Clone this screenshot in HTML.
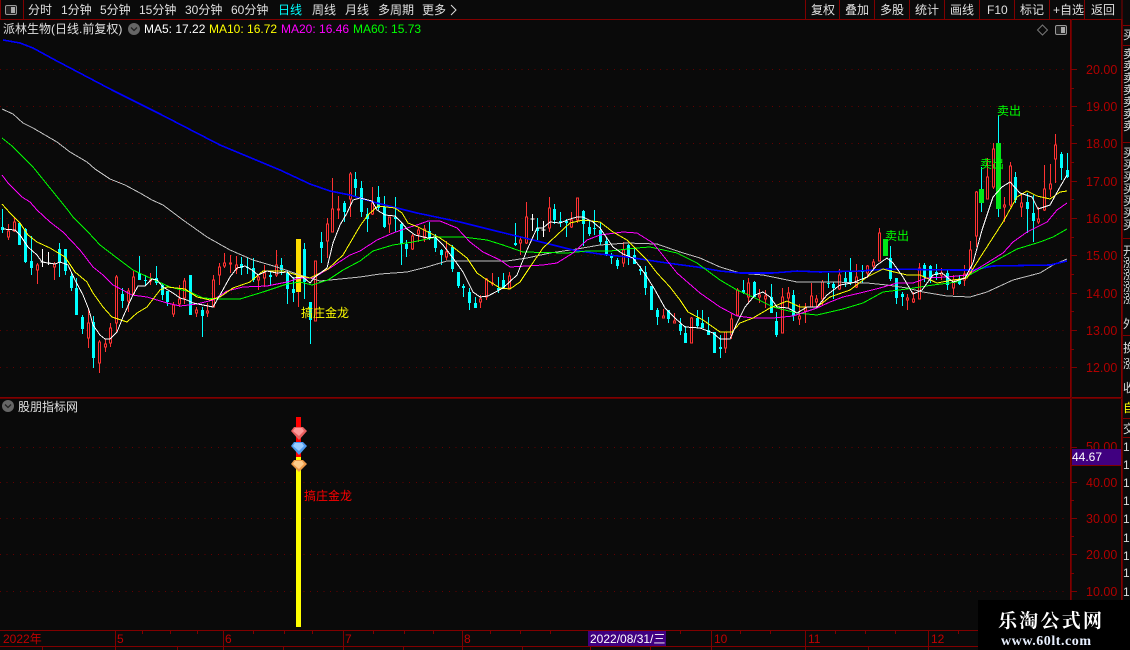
<!DOCTYPE html>
<html><head><meta charset="utf-8"><style>
html,body{margin:0;padding:0;background:#0a0a0a}
svg{display:block}
text{font-family:"Liberation Sans","WenQuanYi Zen Hei","Noto Sans CJK SC",sans-serif;font-size:12px;white-space:pre}
.b{fill:#e0e0e0}
.ax{fill:#b00000;font-size:12.5px}
.c{fill:#ddd}
</style></head><body>
<svg width="1130" height="650" viewBox="0 0 1130 650" xmlns="http://www.w3.org/2000/svg">
<rect width="1130" height="650" fill="#0a0a0a"/>

<!-- grid -->
<path d="M0 69.5H1066M0 106.5H1066M0 143.5H1066M0 181.5H1066M0 218.5H1066M0 255.5H1066M0 293.5H1066M0 330.5H1066M0 367.5H1066M0 447.5H1066M0 482.5H1066M0 518.5H1066M0 554.5H1066M0 591.5H1066" stroke="#640000" stroke-dasharray="1 5.6" fill="none" shape-rendering="crispEdges"/>

<!-- candles -->
<g transform="translate(.5 0)" shape-rendering="crispEdges" fill="none">
<path stroke="#ff3232" d="M8 224V240M14 218V232M37 263V284M54 262V280M88 308V348M99 340V373M105 339V352M110 323V347M116 275V332M128 288V312M133 271V295M150 273V285M173 302V317M179 285V307M184 278V304M196 307V317M207 303V317M213 275V307M219 263V285M224 253V268M230 255V273M236 256V274M258 275V290M264 265V287M276 250V277M298 240V307M315 261V321M327 218V258M332 178V232M338 196V219M350 172V217M372 187V215M389 217V233M412 234V250M418 227V242M424 225V242M446 241V260M480 295V308M486 278V300M492 273V286M509 272V289M520 237V255M526 202V244M549 197V232M571 212V228M577 198V223M623 242V267M663 309V318M674 313V323M691 317V343M725 332V353M731 314V339M737 288V315M748 278V303M759 289V303M765 290V308M782 288V333M788 287V308M799 304V325M805 303V323M811 283V307M816 295V307M822 280V306M839 269V290M856 264V288M867 265V278M873 259V270M879 228V261M907 294V310M913 292V303M919 263V299M941 268V280M953 275V295M964 265V286M970 241V275M976 191V247M987 158V199M993 143V189M1004 197V222M1010 162V207M1021 193V217M1038 207V224M1044 165V211M1050 164V197M1055 134V183"/>
<path stroke="#ff3232" fill="#0a0a0a" d="M7 231h2v6h-2zM13 222h2v9h-2zM36 265h2v5h-2zM53 264h2v3h-2zM87 323h2v15h-2zM98 342h2v21h-2zM104 344h2v3h-2zM109 328h2v15h-2zM115 277h2v46h-2zM127 291h2v10h-2zM132 277h2v17h-2zM149 280h2v1h-2zM172 305h2v9h-2zM178 299h2v5h-2zM183 281h2v17h-2zM195 310h2v3h-2zM206 311h2v2h-2zM212 280h2v27h-2zM218 267h2v8h-2zM223 263h2v3h-2zM229 263h2v1h-2zM235 265h2v4h-2zM257 277h2v3h-2zM263 273h2v5h-2zM275 265h2v10h-2zM314 261h2v60h-2zM326 224h2v17h-2zM331 209h2v23h-2zM337 209h2v1h-2zM349 174h2v25h-2zM371 203h2v11h-2zM388 217h2v7h-2zM411 236h2v13h-2zM417 230h2v4h-2zM423 229h2v9h-2zM445 252h2v5h-2zM479 299h2v3h-2zM485 279h2v18h-2zM491 283h2v1h-2zM508 276h2v12h-2zM519 240h2v3h-2zM525 217h2v26h-2zM548 208h2v20h-2zM570 220h2v7h-2zM576 198h2v22h-2zM622 250h2v13h-2zM662 316h2v2h-2zM673 321h2v2h-2zM690 318h2v25h-2zM724 332h2v16h-2zM730 319h2v16h-2zM736 290h2v25h-2zM747 283h2v14h-2zM758 295h2v2h-2zM764 296h2v3h-2zM781 297h2v36h-2zM787 293h2v5h-2zM798 316h2v3h-2zM804 308h2v3h-2zM810 296h2v11h-2zM815 299h2v3h-2zM821 282h2v17h-2zM838 275h2v14h-2zM855 277h2v10h-2zM866 266h2v7h-2zM872 262h2v4h-2zM878 233h2v28h-2zM906 298h2v2h-2zM912 299h2v3h-2zM918 268h2v31h-2zM940 273h2v2h-2zM952 280h2v8h-2zM963 274h2v6h-2zM969 250h2v24h-2zM975 192h2v44h-2zM986 177h2v22h-2zM992 149h2v38h-2zM1003 205h2v2h-2zM1009 166h2v39h-2zM1020 203h2v4h-2zM1037 219h2v3h-2zM1043 189h2v21h-2zM1049 184h2v5h-2zM1054 145h2v14h-2z"/>
<path stroke="#00ffff" d="M2 209V233M19 223V245M25 228V263M31 236V275M59 243V277M65 249V275M71 272V291M76 278V315M82 315V334M93 316V368M122 288V308M139 256V280M145 275V285M156 266V285M162 283V300M167 291V306M190 275V315M202 307V337M241 257V275M247 257V274M253 258V282M270 272V285M281 258V275M287 270V304M293 277V302M304 243V299M310 302V344M321 232V263M344 201V222M355 172V197M361 181V217M367 208V232M378 186V210M384 196V228M395 197V232M401 223V265M406 240V257M429 222V240M435 234V252M441 249V265M452 245V272M458 272V288M463 284V297M469 288V310M475 297V308M498 277V293M503 273V289M515 223V246M537 218V240M554 204V224M560 212V227M566 219V237M583 210V246M589 220V236M594 210V235M600 222V245M606 237V256M611 253V264M617 258V269M628 244V265M634 248V264M640 266V275M645 266V295M651 286V310M657 308V325M668 310V323M680 318V335M685 326V343M697 310V328M702 310V328M708 317V335M714 332V353M720 335V358M743 280V294M754 281V297M771 284V313M776 312V337M793 290V321M828 273V288M833 282V299M845 272V287M850 258V285M862 265V283M890 246V281M896 278V304M902 292V306M924 263V282M930 265V283M936 264V280M947 270V290M959 275V285M981 167V212M998 115V217M1015 172V203M1027 193V233M1033 195V242M1061 152V180M1067 153V178"/>
<path stroke="#00ffff" stroke-width="3" d="M2 227V230M19 223V245M25 229V262M31 261V268M59 249V263M65 249V271M71 276V288M76 288V315M82 317V329M93 322V358M122 294V301M139 273V280M145 280V281M156 278V283M162 285V295M167 291V302M190 275V315M202 310V316M241 264V268M247 267V268M253 268V280M270 275V277M281 265V270M287 273V289M293 289V293M304 249V282M310 302V320M321 242V248M344 203V212M355 179V188M361 188V212M367 214V219M378 197V208M384 207V227M395 217V219M401 224V244M406 244V249M429 231V238M435 237V248M441 250V255M452 247V269M458 272V286M463 286V288M469 292V303M475 303V308M498 288V290M503 280V288M515 243V245M537 228V231M554 209V220M560 221V223M566 221V223M583 211V224M589 227V234M594 228V229M600 230V242M606 241V255M611 256V258M617 260V266M628 245V257M634 255V264M640 269V271M645 272V288M651 286V310M657 310V317M668 310V319M680 324V331M685 333V343M697 318V326M702 323V328M708 330V335M714 332V353M720 347V349M743 290V293M754 282V297M771 297V313M776 321V335M793 295V316M828 283V284M833 284V288M845 278V283M850 272V283M862 270V272M890 258V279M896 278V298M902 294V297M924 265V277M930 266V278M936 272V275M947 273V285M959 280V284M1015 177V200M1027 202V209M1033 213V221M1061 154V168M1067 170V177"/>
<path stroke="#fff" d="M42 249V267M48 252V265M532 214V231M543 221V237M40 262H44M46 263H50M530 219H534M541 230H545"/>
<rect x="295.5" y="239" width="5" height="53" fill="#ffdd00"/>
<rect x="882.5" y="239" width="5" height="17" fill="#00e818"/>
<rect x="978.5" y="189" width="5" height="14" fill="#00e818"/>
<rect x="995.5" y="143" width="5" height="66" fill="#00e818"/>
</g>

<!-- moving averages -->
<g fill="none" shape-rendering="crispEdges">
<polyline stroke="#c0c0c0" points="2,109 13,114 23,123 33,128 45,135 57,142 70,152 87,162 95,169 110,179 125,185 140,193 152,200 163,205 183,220 207,237 230,250 253,260 277,267 300,275 320,281 340,279 360,277 380,274 407,272 427,267 447,261 507,261 527,258 550,253 577,249 600,245 627,243 657,244 680,252 700,258 720,267 740,273 763,275 797,282 833,282 867,283 887,285 907,288 923,292 947,296 970,297 987,292 1013,280 1040,273 1053,265 1067,259"/>
<polyline stroke="#0000ff" stroke-width="1.6" points="3,40 20,43 33,48 55,60 112,90 140,104 160,114 220,145 280,170 310,184 330,191 350,195 377,203 417,213 460,222 500,232 533,240 573,250 600,254 627,257 667,263 697,267 720,271 740,273 773,273 797,271 820,272 860,271 887,269 953,270 973,270 993,266 1050,265 1067,261"/>
<polyline stroke="#00ff00" points="2,138 12,146 33,167 50,188 67,209 73,217 88,232 100,245 117,258 133,270 150,278 170,287 190,292 203,298 220,299 240,299 263,292 287,284 300,282 312,285 328,280 343,270 360,261 373,251 393,245 413,242 437,237 463,237 487,240 503,245 523,252 567,253 587,251 610,251 637,248 650,247 677,253 697,263 720,280 737,290 753,297 773,307 797,313 817,315 843,309 863,303 883,292 907,289 933,285 957,282 973,273 997,260 1017,249 1040,242 1053,237 1067,229"/>
<polyline stroke="#ff00ff" points="2,175 8,183 22,197 30,202 37,210 50,222 63,232 80,250 93,267 103,275 113,285 132,295 147,297 167,303 180,306 197,304 213,300 227,291 243,287 267,286 287,282 300,278 313,278 330,268 350,255 360,251 377,240 393,233 407,228 417,225 428,221 440,221 457,228 470,242 483,252 500,260 510,267 543,265 557,263 573,253 587,240 600,235 623,232 637,233 653,243 677,273 700,293 720,307 737,316 753,318 773,318 793,316 817,308 830,302 843,297 860,293 880,288 897,283 913,283 927,278 947,277 967,275 987,263 1003,253 1013,242 1027,232 1047,222 1057,210 1067,203"/>
<polyline stroke="#ffff00" points="2,204 10,213 20,223 28,235 37,242 50,248 65,257 75,272 87,282 93,293 103,307 112,317 127,322 137,313 147,307 160,290 167,287 185,289 197,297 210,300 220,297 233,288 250,282 263,271 283,271 297,275 310,278 328,269 343,255 360,226 368,215 378,206 395,208 402,213 408,223 418,227 428,232 440,238 453,247 467,258 477,273 487,280 500,288 510,289 520,282 530,267 543,248 557,235 570,223 583,220 600,222 613,232 627,240 637,250 647,260 657,273 670,287 680,300 688,312 703,320 720,332 732,332 740,323 753,318 770,308 787,301 800,307 817,307 830,297 850,290 867,277 883,269 890,271 907,275 920,275 937,283 953,280 967,278 983,253 1003,222 1017,197 1027,191 1037,196 1050,199 1060,192 1067,191"/>
<polyline stroke="#ffffff" points="3,229 15,230 20,235 28,247 37,255 42,262 48,263 55,264 60,262 68,265 75,280 83,295 89,310 93,325 100,335 105,339 110,339 117,332 123,317 132,297 138,286 145,286 152,279 157,280 163,287 173,293 180,298 187,300 193,303 203,305 213,307 220,295 230,277 237,268 245,266 252,270 258,275 267,271 277,273 287,272 293,278 303,277 310,283 315,277 327,268 333,243 340,225 347,213 353,200 360,198 372,201 377,210 385,215 395,216 402,223 407,229 415,235 428,238 435,237 443,245 453,258 463,272 473,292 480,297 488,296 503,288 517,275 527,250 537,228 543,228 550,222 560,223 570,219 577,217 583,217 593,222 600,228 613,247 623,254 633,258 640,267 647,277 655,290 665,308 675,318 685,327 700,328 713,333 720,339 730,339 737,323 745,307 755,295 763,292 770,297 777,307 788,308 797,313 807,307 817,307 827,295 840,285 852,283 867,277 877,265 887,258 893,263 903,277 913,294 922,290 933,275 942,273 953,282 965,278 973,263 982,230 993,197 1002,187 1010,182 1020,193 1032,197 1038,209 1050,205 1060,187 1067,175"/>
</g>

<!-- chart labels -->
<text x="301" y="317" fill="#ffff00">搞庄金龙</text>
<text x="997" y="115" fill="#00ff00">卖出</text>
<text x="980" y="168" fill="#00ff00">卖出</text>
<text x="885" y="240" fill="#00ff00">卖出</text>

<!-- toolbar -->
<path d="M0 19.5H1122M0.5 0V19M23.5 0V19M805.5 0V19M839.5 0V19M874.5 0V19M909.5 0V19M944.5 0V19M979.5 0V19M1014.5 0V19M1049.5 0V19M1084.5 0V19M1122 0V19" stroke="#800000" fill="none" shape-rendering="crispEdges"/>
<rect x="5.5" y="5.5" width="11" height="9" rx="1.5" fill="#222" stroke="#999"/>
<rect x="11" y="7" width="4" height="6" fill="#aaa"/>
<g class="b">
<text class="b" x="28" y="14">分时</text>
<text class="b" x="61" y="14">1分钟</text>
<text class="b" x="100" y="14">5分钟</text>
<text class="b" x="139" y="14">15分钟</text>
<text class="b" x="185" y="14">30分钟</text>
<text class="b" x="231" y="14">60分钟</text>
<text x="278" y="14" fill="#00ffff">日线</text>
<text class="b" x="312" y="14">周线</text>
<text class="b" x="345" y="14">月线</text>
<text class="b" x="378" y="14">多周期</text>
<text class="b" x="422" y="14">更多</text>
<text class="b" x="811" y="14">复权</text>
<text class="b" x="845" y="14">叠加</text>
<text class="b" x="880" y="14">多股</text>
<text class="b" x="915" y="14">统计</text>
<text class="b" x="950" y="14">画线</text>
<text class="b" x="987" y="14">F10</text>
<text class="b" x="1020" y="14">标记</text>
<text class="b" x="1053" y="14">+自选</text>
<text class="b" x="1091" y="14">返回</text>
</g>
<path d="M451 5L456 10L451 15" stroke="#ddd" fill="none"/>

<!-- title row -->
<text class="b" x="3" y="33">派林生物(日线.前复权)</text>
<circle cx="134" cy="29" r="6" fill="#666"/>
<path d="M131 27.5L134 30.5L137 27.5" stroke="#222" stroke-width="1.3" fill="none"/>
<text x="144" y="33" fill="#fff">MA5: 17.22</text>
<text x="209" y="33" fill="#ffff00">MA10: 16.72</text>
<text x="281" y="33" fill="#ff00ff">MA20: 16.46</text>
<text x="353" y="33" fill="#00ff00">MA60: 15.73</text>
<path d="M1042.5 25L1047.5 30L1042.5 35L1037.5 30Z" stroke="#777" fill="none"/>
<rect x="1055.5" y="25.5" width="11" height="9" rx="1.5" fill="#222" stroke="#999"/>
<rect x="1061" y="27" width="4" height="6" fill="#aaa"/>

<!-- frames -->
<path d="M1070.5 19V630M1121.5 19V600M0 397.5H1122M0 630.5H978M0 646.5H978M1122 25.5H1130M1122 45.5H1130M1122 142.5H1130M1122 238.5H1130M1122 335.5H1130M1122 418.5H1130M1122 437.5H1130" stroke="#800000" fill="none" shape-rendering="crispEdges"/>
<path d="M1071.5 19V630M1122.5 19V600M0 398.5H1122" stroke="#600000" fill="none" shape-rendering="crispEdges"/>
<path d="M1071 69.5H1077M1071 106.5H1077M1071 143.5H1077M1071 181.5H1077M1071 218.5H1077M1071 255.5H1077M1071 293.5H1077M1071 330.5H1077M1071 367.5H1077M1071 88.5H1074M1071 125.5H1074M1071 162.5H1074M1071 199.5H1074M1071 237.5H1074M1071 274.5H1074M1071 311.5H1074M1071 349.5H1074M1071 447.5H1077M1071 482.5H1077M1071 518.5H1077M1071 554.5H1077M1071 591.5H1077M1071 465.5H1074M1071 500.5H1074M1071 536.5H1074M1071 573.5H1074" stroke="#800000" shape-rendering="crispEdges"/>
<g class="ax">
<text class="ax" x="1086" y="74">20.00</text>
<text class="ax" x="1086" y="111">19.00</text>
<text class="ax" x="1086" y="148">18.00</text>
<text class="ax" x="1086" y="186">17.00</text>
<text class="ax" x="1086" y="223">16.00</text>
<text class="ax" x="1086" y="260">15.00</text>
<text class="ax" x="1086" y="298">14.00</text>
<text class="ax" x="1086" y="335">13.00</text>
<text class="ax" x="1086" y="372">12.00</text>
<text class="ax" x="1086" y="451">50.00</text>
<text class="ax" x="1086" y="487">40.00</text>
<text class="ax" x="1086" y="523">30.00</text>
<text class="ax" x="1086" y="559">20.00</text>
<text class="ax" x="1086" y="596">10.00</text>
</g>
<rect x="1072" y="449" width="49" height="16" fill="#400080"/>
<path d="M1072 465.5H1121" stroke="#800000" shape-rendering="crispEdges"/>
<text x="1072" y="461" fill="#fff">44.67</text>

<!-- right column -->
<g class="c">
<text class="c" x="1123" y="39">买</text>
<text class="c" x="1123" y="58">卖</text><text class="c" x="1123" y="70">卖</text><text class="c" x="1123" y="82">卖</text><text class="c" x="1123" y="94">卖</text><text class="c" x="1123" y="106">卖</text><text class="c" x="1123" y="118">卖</text><text class="c" x="1123" y="130">卖</text>
<text class="c" x="1123" y="157">买</text><text class="c" x="1123" y="169">买</text><text class="c" x="1123" y="181">买</text><text class="c" x="1123" y="193">买</text><text class="c" x="1123" y="205">买</text><text class="c" x="1123" y="217">买</text><text class="c" x="1123" y="229">买</text>
<text class="c" x="1123" y="255">开</text><text class="c" x="1123" y="267">涨</text><text class="c" x="1123" y="279">涨</text><text class="c" x="1123" y="291">涨</text><text class="c" x="1123" y="303">涨</text><text class="c" x="1123" y="328">外</text>
<text class="c" x="1123" y="352">换</text><text class="c" x="1123" y="368">涨</text><text class="c" x="1123" y="392">收</text>
<text x="1123" y="412" fill="#ffff00">自</text>
<text class="c" x="1123" y="433">交</text>
<text class="c" x="1123" y="451">1</text><text class="c" x="1123" y="469">1</text><text class="c" x="1123" y="487">1</text><text class="c" x="1123" y="505">1</text><text class="c" x="1123" y="523">1</text><text class="c" x="1123" y="542">1</text><text class="c" x="1123" y="560">1</text><text class="c" x="1123" y="577">1</text><text class="c" x="1123" y="596">1</text>
</g>

<!-- lower panel -->
<circle cx="8" cy="406" r="6" fill="#666"/>
<path d="M5 404.5L8 407.5L11 404.5" stroke="#222" stroke-width="1.3" fill="none"/>
<text class="b" x="18" y="411">股朋指标网</text>
<rect x="296" y="417" width="5" height="40" fill="#ff0000"/>
<rect x="296" y="457" width="5" height="170" fill="#ffff00"/>
<g>
<polygon points="294,427 303,427 307,431 299,440 291,431" fill="#e86060"/>
<polygon points="295,428 302,428 304,431 299,436 293,431" fill="#ff9a9a"/>
<polygon points="294,442 303,442 307,446 299,455 291,446" fill="#4f9cf0"/>
<polygon points="295,443 302,443 304,446 299,451 293,446" fill="#9accff"/>
<polygon points="294,460 303,460 307,464 299,472 291,464" fill="#ee9a4a"/>
<polygon points="295,461 302,461 304,464 299,469 293,464" fill="#ffcc8c"/>
</g>
<text x="304" y="500" fill="#ff0000">搞庄金龙</text>

<!-- date axis -->
<path d="M115.5 630V646M223.5 630V646M343.5 630V646M462.5 630V646M711.5 630V646M805.5 630V646M928.5 630V646M142.5 631V634M170.5 631V634M197.5 631V634M253.5 631V634M284.5 631V634M312.5 631V634M373.5 631V634M404.5 631V634M433.5 631V634M490.5 631V634M520.5 631V634M550.5 631V634M680.5 631V634M740.5 631V634M770.5 631V634M835.5 631V634M865.5 631V634M895.5 631V634M958.5 631V634M42.5 646V650M115.5 646V650M177.5 646V650M223.5 646V650M283.5 646V650M343.5 646V650M403.5 646V650M462.5 646V650M522.5 646V650M590.5 646V650M650.5 646V650M711.5 646V650M805.5 646V650M868.5 646V650M928.5 646V650" stroke="#800000" shape-rendering="crispEdges"/>
<text x="3" y="643" fill="#c00000">2022年</text>
<text x="117" y="643" fill="#c00000">5</text>
<text x="225" y="643" fill="#c00000">6</text>
<text x="345" y="643" fill="#c00000">7</text>
<text x="464" y="643" fill="#c00000">8</text>
<text x="714" y="643" fill="#c00000">10</text>
<text x="808" y="643" fill="#c00000">11</text>
<text x="931" y="643" fill="#c00000">12</text>
<rect x="588" y="631" width="78" height="15" fill="#400080"/>
<text x="590" y="643" fill="#fff">2022/08/31/三</text>

<!-- watermark -->
<rect x="978" y="600" width="152" height="50" fill="#000"/>
<text x="998" y="627" fill="#fff" style="font-family:'Noto Serif CJK SC','Liberation Serif',serif;font-size:19px;font-weight:700" textLength="104">乐淘公式网</text>
<text x="1001" y="645" fill="#e8f0ff" style="font-family:'Liberation Serif',serif;font-size:14px;font-weight:700" textLength="90">www.60lt.com</text>
</svg>
</body></html>
